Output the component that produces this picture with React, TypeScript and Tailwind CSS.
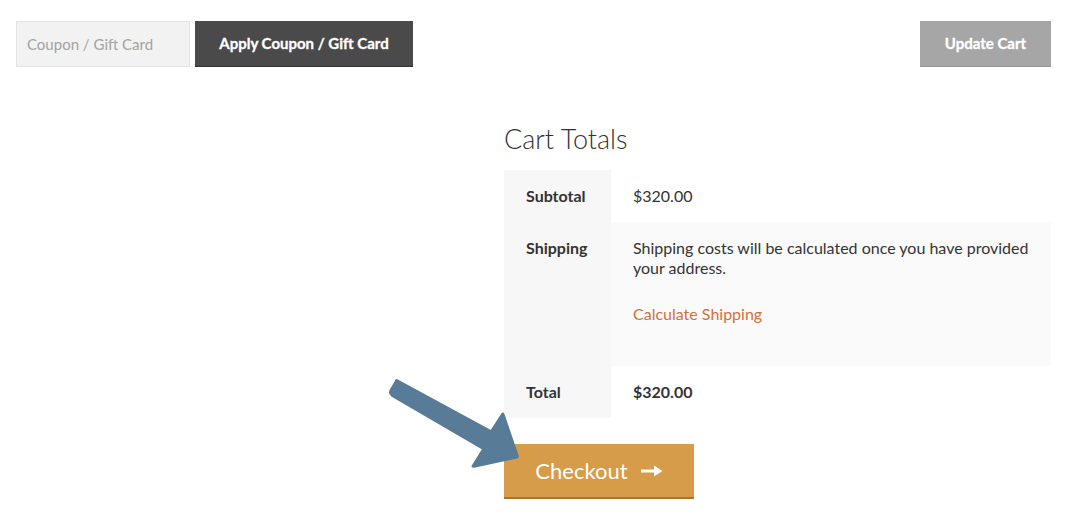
import React from "react";

export default function App() {
  return (
    <div className="relative w-[1067px] h-[516px] bg-white overflow-hidden px-4 pt-[21px] text-[#333]" style={{ fontFamily: "Lato, 'Open Sans', sans-serif" }}>
      <div className="flex items-start justify-between">
        <div className="flex gap-[5px]">
          <input
            placeholder="Coupon / Gift Card"
            className="w-[174px] h-[46px] bg-[#f2f2f2] border border-[#e4e4e4] px-[10px] text-[15px] placeholder:text-[#a3a3a3] outline-none"
          />
          <button className="w-[218px] h-[46px] bg-[#4a4a4a] border-b border-[#333] text-white font-bold text-[15px] [-webkit-text-stroke:0.3px_white]">
            Apply Coupon / Gift Card
          </button>
        </div>
        <button className="w-[131px] h-[46px] bg-[#a6a6a6] border-b border-[#969696] text-white font-bold text-[15px] [-webkit-text-stroke:0.3px_white]">
          Update Cart
        </button>
      </div>

      <div className="ml-auto w-[547px] mt-[54px]">
        <h2 className="text-[27px] font-light leading-[36px] text-[#333] mb-[13px]">Cart Totals</h2>
        <div className="text-[16px] leading-[20px]">
          <div className="flex">
            <div className="w-[107px] bg-[#f7f7f7] pl-[22px] py-[16px] font-bold">Subtotal</div>
            <div className="flex-1 bg-white pl-[22px] py-[16px]">$320.00</div>
          </div>
          <div className="flex">
            <div className="w-[107px] bg-[#f7f7f7] pl-[22px] pt-[16px] font-bold">Shipping</div>
            <div className="flex-1 bg-[#fafafa] pl-[22px] pr-[16px] pt-[16px] h-[144px]">
              <p>Shipping costs will be calculated once you have provided your address.</p>
              <p className="mt-[26px] text-[#d3703a]">Calculate Shipping</p>
            </div>
          </div>
          <div className="flex">
            <div className="w-[107px] bg-[#f7f7f7] pl-[22px] py-[16px] font-bold">Total</div>
            <div className="flex-1 bg-white pl-[22px] py-[16px] font-bold">$320.00</div>
          </div>
        </div>
        <button className="mt-[26px] w-[190px] h-[55px] bg-[#d69c49] border-b-2 border-[#a8742e] text-white text-[22px] flex items-center justify-center gap-[13px]">
          <span>Checkout</span>
          <svg width="22" height="12" viewBox="0 0 22 12" className="mt-[1px]">
            <rect x="0" y="4.5" width="14" height="3" fill="white" />
            <path d="M13 0.5 L21.5 6 L13 11.5 Z" fill="white" />
          </svg>
        </button>
      </div>

      <svg className="absolute left-0 top-0" width="1067" height="516" viewBox="0 0 1067 516">
        <path
          d="M397 380 L491 431 L502 414 Q503 412 504 415 L518 456 Q518 458 516 458 L474 467 Q471 467 473 465 L483 449 L392 396 Q388 393 391 389 L395 382 Q396 379 397 380 Z"
          fill="#587b97"
          stroke="#587b97"
          strokeWidth="1.5"
          strokeLinejoin="round"
        />
      </svg>
    </div>
  );
}
